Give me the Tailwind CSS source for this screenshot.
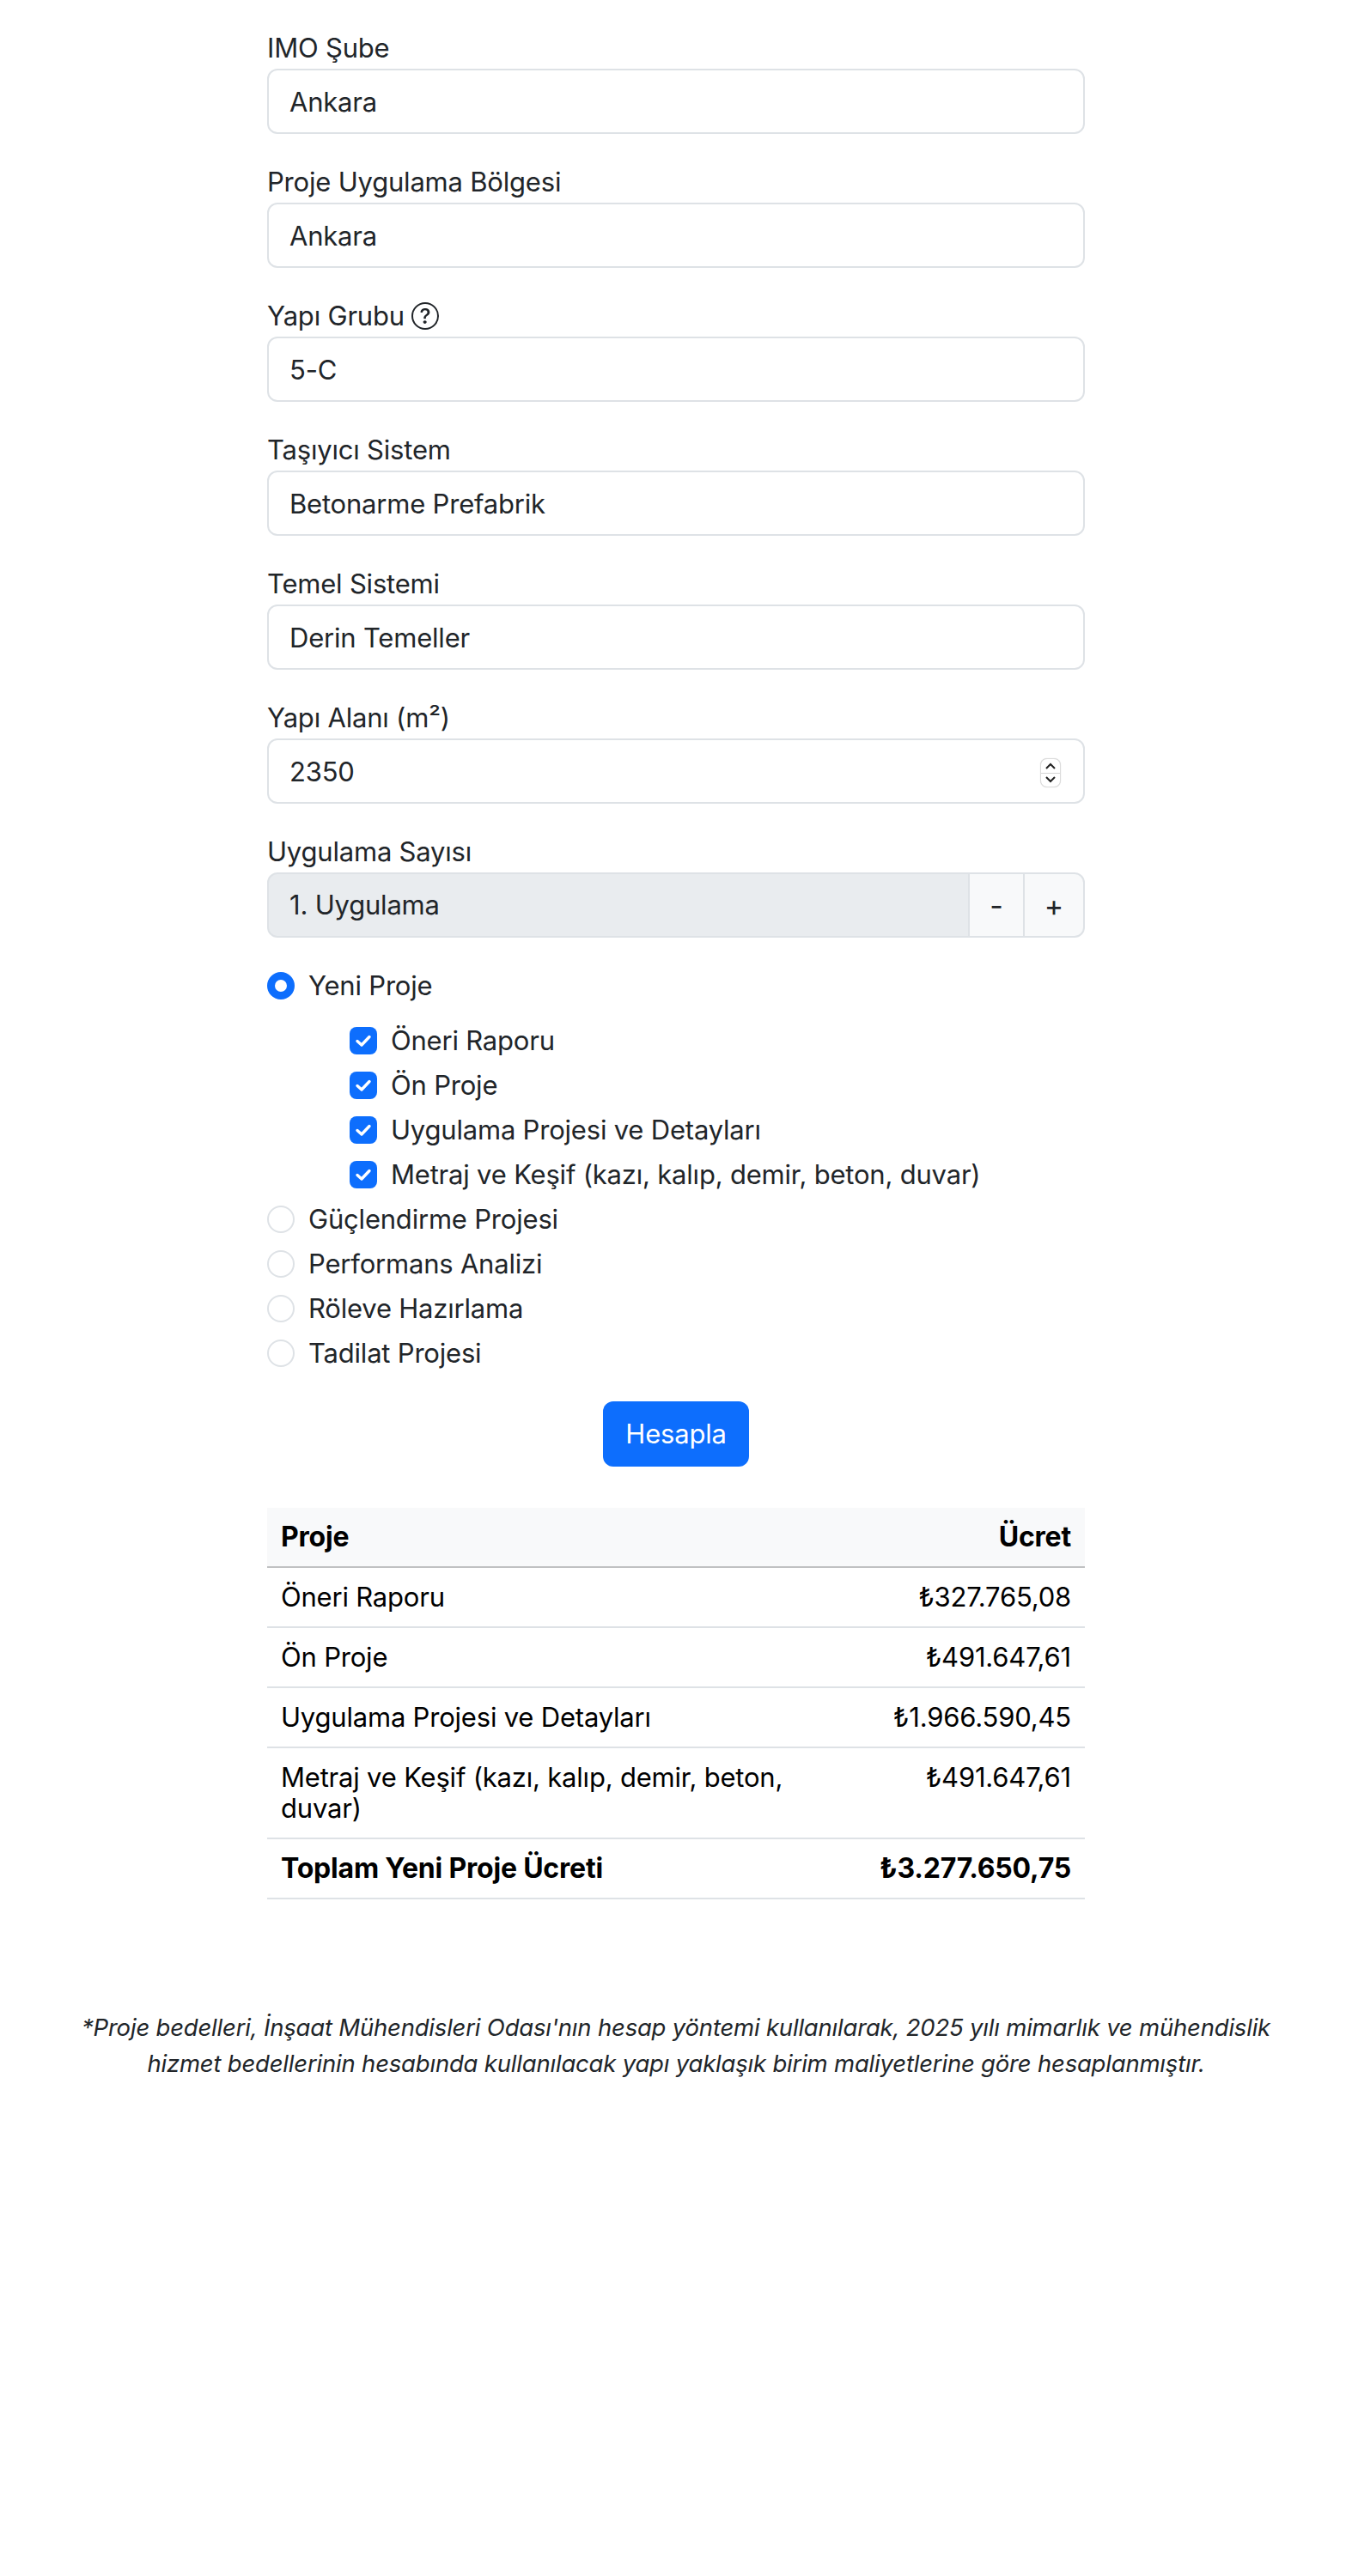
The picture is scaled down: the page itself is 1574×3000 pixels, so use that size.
<!DOCTYPE html>
<html lang="tr">
<head>
    <meta charset="UTF-8">
    <title>Proje Ücreti Hesaplama</title>
    <script src="https://cdn.jsdelivr.net/npm/@tailwindcss/browser@4"></script>
</head>
<body class="bg-white text-[#212529] font-['Inter',sans-serif] text-[31px] tracking-[-0.2px]">
    <div class="w-[952px] ml-[311px] pt-[32px]">
        <!-- Form fields -->
        <div class="mb-[32px]">
            <label class="block h-[48px] leading-[48px]">IMO Şube</label>
            <input type="text" value="Ankara" class="block w-full h-[76px] px-[24px] rounded-[12px] border-2 border-[#dee2e6] bg-white">
        </div>
        <div class="mb-[32px]">
            <label class="block h-[48px] leading-[48px]">Proje Uygulama Bölgesi</label>
            <input type="text" value="Ankara" class="block w-full h-[76px] px-[24px] rounded-[12px] border-2 border-[#dee2e6] bg-white">
        </div>
        <div class="mb-[32px]">
            <label class="flex items-center gap-[8px] h-[48px] leading-[48px]">Yapı Grubu
                <svg width="32" height="32" viewBox="0 0 16 16" fill="#212529">
                    <path d="M8 15A7 7 0 1 1 8 1a7 7 0 0 1 0 14m0 1A8 8 0 1 0 8 0a8 8 0 0 0 0 16"/>
                    <path d="M5.255 5.786a.237.237 0 0 0 .241.247h.825c.138 0 .248-.113.266-.25.09-.656.54-1.134 1.342-1.134.686 0 1.314.343 1.314 1.168 0 .635-.374.927-.965 1.371-.673.489-1.206 1.06-1.168 1.987l.003.217a.25.25 0 0 0 .25.246h.811a.25.25 0 0 0 .25-.25v-.105c0-.718.273-.927 1.01-1.486.609-.463 1.244-.977 1.244-2.056 0-1.511-1.276-2.241-2.673-2.241-1.267 0-2.655.59-2.75 2.286m1.557 5.763c0 .533.425.927 1.01.927.609 0 1.028-.394 1.028-.927 0-.552-.42-.94-1.029-.94-.584 0-1.009.388-1.009.94"/>
                </svg>
            </label>
            <input type="text" value="5-C" class="block w-full h-[76px] px-[24px] rounded-[12px] border-2 border-[#dee2e6] bg-white">
        </div>
        <div class="mb-[32px]">
            <label class="block h-[48px] leading-[48px]">Taşıyıcı Sistem</label>
            <input type="text" value="Betonarme Prefabrik" class="block w-full h-[76px] px-[24px] rounded-[12px] border-2 border-[#dee2e6] bg-white">
        </div>
        <div class="mb-[32px]">
            <label class="block h-[48px] leading-[48px]">Temel Sistemi</label>
            <input type="text" value="Derin Temeller" class="block w-full h-[76px] px-[24px] rounded-[12px] border-2 border-[#dee2e6] bg-white">
        </div>
        <div class="mb-[32px]">
            <label class="block h-[48px] leading-[48px]">Yapı Alanı (m²)</label>
            <div class="relative">
                <input type="text" value="2350" class="block w-full h-[76px] px-[24px] rounded-[12px] border-2 border-[#dee2e6] bg-white">
                <!-- number spinner -->
                <div class="absolute top-[23px] right-[28px] w-[24px] h-[34px] flex flex-col rounded-[8px] border border-[#dcdcdc] shadow-[0_0_1px_#0003] bg-white overflow-hidden">
                    <div class="flex-1 flex items-center justify-center border-b border-[#d4d4d4]">
                        <svg width="14" height="10" viewBox="0 0 14 10" fill="none" stroke="#222" stroke-width="2"><path d="M2 8l5-5 5 5"/></svg>
                    </div>
                    <div class="flex-1 flex items-center justify-center">
                        <svg width="14" height="10" viewBox="0 0 14 10" fill="none" stroke="#222" stroke-width="2"><path d="M2 2l5 5 5-5"/></svg>
                    </div>
                </div>
            </div>
        </div>
        <div class="mb-[32px]">
            <label class="block h-[48px] leading-[48px]">Uygulama Sayısı</label>
            <div class="flex h-[76px]">
                <input type="text" value="1. Uygulama" disabled class="flex-1 min-w-0 px-[24px] rounded-l-[12px] border-2 border-[#dee2e6] bg-[#e9ecef] text-[#212529] opacity-100">
                <button type="button" class="w-[66px] -ml-[2px] border-2 border-[#dee2e6] bg-[#f8f9fa] text-[34px]">-</button>
                <button type="button" class="w-[72px] -ml-[2px] border-2 border-[#dee2e6] bg-[#f8f9fa] rounded-r-[12px] text-[34px]">+</button>
            </div>
        </div>

        <!-- Project type -->
        <div class="flex flex-col">
            <div class="flex items-center h-[48px] mb-[14px]">
                <span class="w-[32px] h-[32px] rounded-full border-[9px] border-[#0d6efd] bg-white"></span>
                <span class="ml-[16px]">Yeni Proje</span>
            </div>
            <div class="flex flex-col pl-[96px]">
                <div class="flex items-center h-[52px]">
                    <span class="w-[32px] h-[32px] rounded-[8px] bg-[#0d6efd] flex items-center justify-center"><svg width="20" height="16" viewBox="0 0 20 16" fill="none" stroke="#fff" stroke-width="3.4" stroke-linecap="round" stroke-linejoin="round"><path d="M3 8.5l5 4.5 9-9.5"/></svg></span>
                    <span class="ml-[16px]">Öneri Raporu</span>
                </div>
                <div class="flex items-center h-[52px]">
                    <span class="w-[32px] h-[32px] rounded-[8px] bg-[#0d6efd] flex items-center justify-center"><svg width="20" height="16" viewBox="0 0 20 16" fill="none" stroke="#fff" stroke-width="3.4" stroke-linecap="round" stroke-linejoin="round"><path d="M3 8.5l5 4.5 9-9.5"/></svg></span>
                    <span class="ml-[16px]">Ön Proje</span>
                </div>
                <div class="flex items-center h-[52px]">
                    <span class="w-[32px] h-[32px] rounded-[8px] bg-[#0d6efd] flex items-center justify-center"><svg width="20" height="16" viewBox="0 0 20 16" fill="none" stroke="#fff" stroke-width="3.4" stroke-linecap="round" stroke-linejoin="round"><path d="M3 8.5l5 4.5 9-9.5"/></svg></span>
                    <span class="ml-[16px]">Uygulama Projesi ve Detayları</span>
                </div>
                <div class="flex items-center h-[52px]">
                    <span class="w-[32px] h-[32px] rounded-[8px] bg-[#0d6efd] flex items-center justify-center"><svg width="20" height="16" viewBox="0 0 20 16" fill="none" stroke="#fff" stroke-width="3.4" stroke-linecap="round" stroke-linejoin="round"><path d="M3 8.5l5 4.5 9-9.5"/></svg></span>
                    <span class="ml-[16px]">Metraj ve Keşif (kazı, kalıp, demir, beton, duvar)</span>
                </div>
            </div>
            <div class="flex items-center h-[52px]">
                <span class="w-[32px] h-[32px] rounded-full border-2 border-[#dee2e6] bg-white"></span>
                <span class="ml-[16px]">Güçlendirme Projesi</span>
            </div>
            <div class="flex items-center h-[52px]">
                <span class="w-[32px] h-[32px] rounded-full border-2 border-[#dee2e6] bg-white"></span>
                <span class="ml-[16px]">Performans Analizi</span>
            </div>
            <div class="flex items-center h-[52px]">
                <span class="w-[32px] h-[32px] rounded-full border-2 border-[#dee2e6] bg-white"></span>
                <span class="ml-[16px]">Röleve Hazırlama</span>
            </div>
            <div class="flex items-center h-[52px]">
                <span class="w-[32px] h-[32px] rounded-full border-2 border-[#dee2e6] bg-white"></span>
                <span class="ml-[16px]">Tadilat Projesi</span>
            </div>
        </div>

        <div class="flex justify-center mt-[30px]">
            <button type="button" class="h-[76px] px-[26px] rounded-[12px] bg-[#0d6efd] text-white">Hesapla</button>
        </div>

        <!-- Results -->
        <table class="w-full mt-[48px] border-collapse text-black">
            <thead>
                <tr class="bg-[#f8f9fa] border-b-2 border-[#c0c1c2] font-bold text-[32px]">
                    <th class="p-[16px] leading-[36px] text-left">Proje</th>
                    <th class="p-[16px] leading-[36px] text-right">Ücret</th>
                </tr>
            </thead>
            <tbody>
                <tr class="border-b-2 border-[#dee2e6]">
                    <td class="p-[16px] leading-[36px] w-[650px]">Öneri Raporu</td>
                    <td class="p-[16px] leading-[36px] text-right align-top">₺327.765,08</td>
                </tr>
                <tr class="border-b-2 border-[#dee2e6]">
                    <td class="p-[16px] leading-[36px]">Ön Proje</td>
                    <td class="p-[16px] leading-[36px] text-right align-top">₺491.647,61</td>
                </tr>
                <tr class="border-b-2 border-[#dee2e6]">
                    <td class="p-[16px] leading-[36px]">Uygulama Projesi ve Detayları</td>
                    <td class="p-[16px] leading-[36px] text-right align-top">₺1.966.590,45</td>
                </tr>
                <tr class="border-b-2 border-[#dee2e6]">
                    <td class="p-[16px] leading-[36px]">Metraj ve Keşif (kazı, kalıp, demir, beton, duvar)</td>
                    <td class="p-[16px] leading-[36px] text-right align-top">₺491.647,61</td>
                </tr>
                <tr class="border-b-2 border-[#dee2e6] font-bold text-[32px]">
                    <td class="p-[16px] leading-[36px]">Toplam Yeni Proje Ücreti</td>
                    <td class="p-[16px] leading-[36px] text-right align-top">₺3.277.650,75</td>
                </tr>
            </tbody>
        </table>
    </div>

    <p class="mt-[128px] mx-auto w-[1440px] text-center italic text-[27.5px] leading-[42px] tracking-[-0.2px]">*Proje bedelleri, İnşaat Mühendisleri Odası'nın hesap yöntemi kullanılarak, 2025 yılı mimarlık ve mühendislik hizmet bedellerinin hesabında kullanılacak yapı yaklaşık birim maliyetlerine göre hesaplanmıştır.</p>
</body>
</html>
